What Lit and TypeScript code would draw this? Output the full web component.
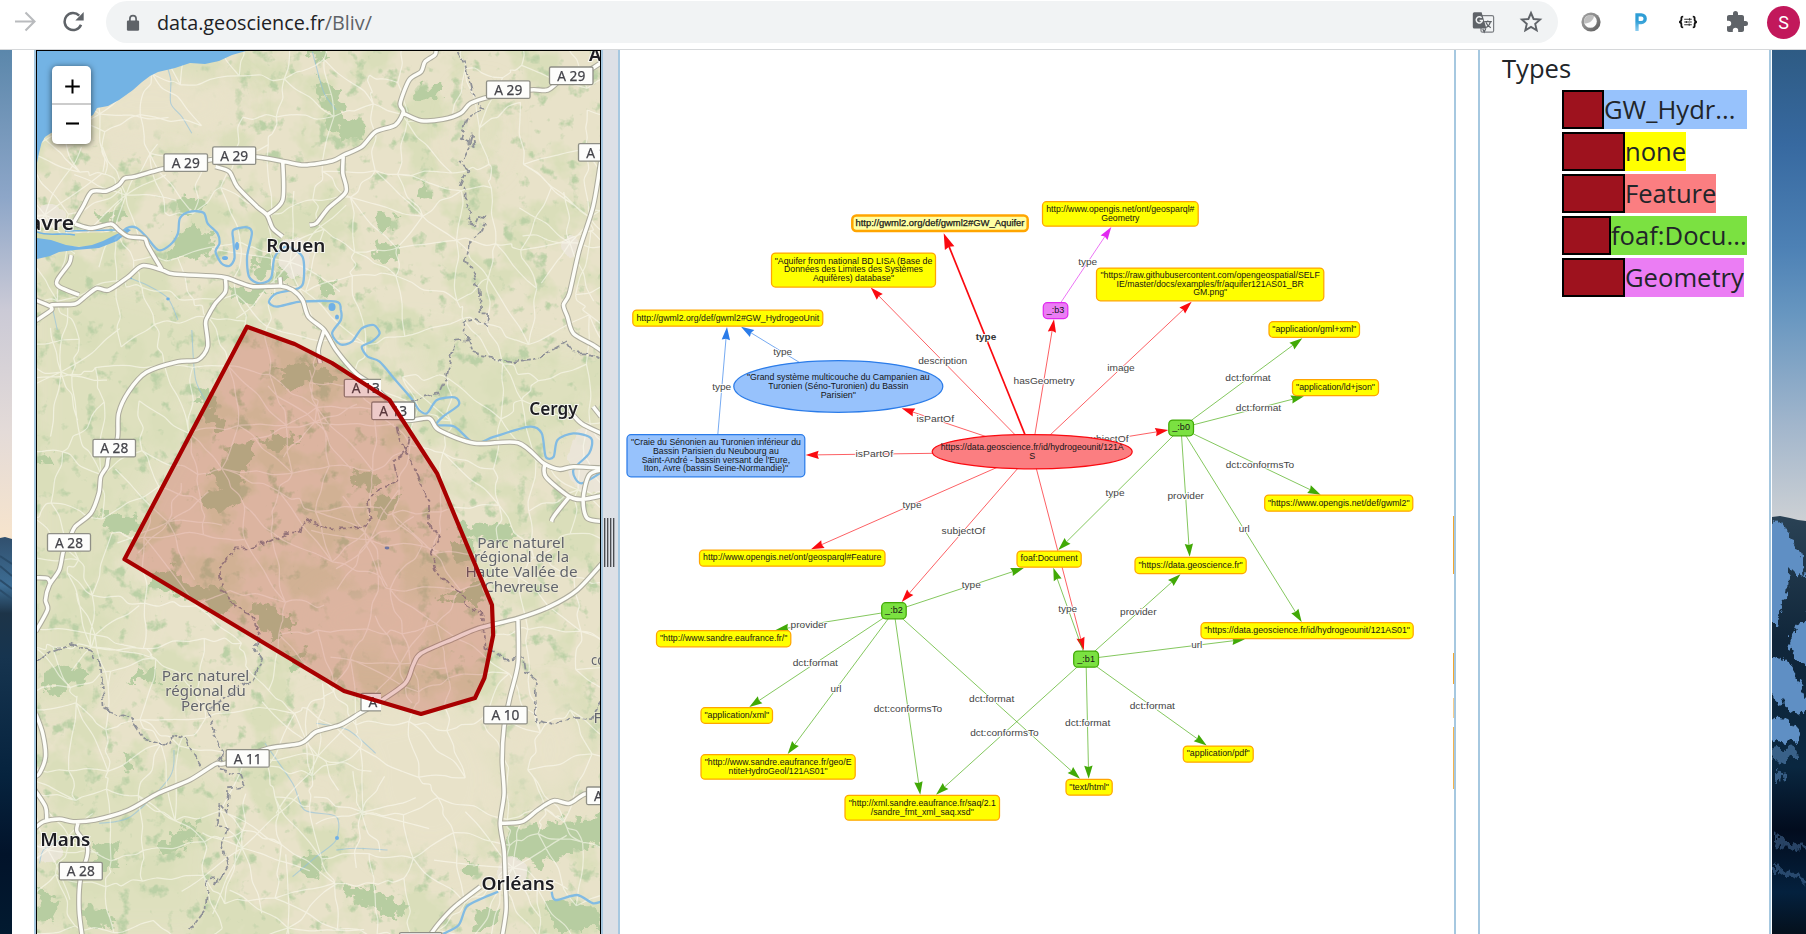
import { LitElement, html, svg, css, nothing } from "lit";
import { customElement } from "lit/decorators.js";

type Pt = [number, number];

/* ---------- map geometry helpers ---------- */

// The map sheet is digitised in three rows; each has its own vertical origin.
const ROW_TOP = [0, 310, 610];
const SX = 620 / 1568;
const SY = 1 / 3;

const pts = (row: number, data: string): Pt[] =>
  data.split(" ").map((p) => {
    const [x, y] = p.split(",").map(Number);
    return [x * SX, y * SY + ROW_TOP[row]] as Pt;
  });

const f = (n: number) => n.toFixed(1);

const smooth = (p: Pt[]): string => {
  let d = `M${f(p[0][0])} ${f(p[0][1])}`;
  for (let i = 0; i < p.length - 1; i++) {
    const a = p[i - 1] ?? p[i];
    const b = p[i];
    const c = p[i + 1];
    const e = p[i + 2] ?? c;
    const k = 7;
    d += `C${f(b[0] + (c[0] - a[0]) / k)} ${f(b[1] + (c[1] - a[1]) / k)} ${f(c[0] - (e[0] - b[0]) / k)} ${f(c[1] - (e[1] - b[1]) / k)} ${f(c[0])} ${f(c[1])}`;
  }
  return d;
};

const MOTORWAYS: [number, string][] = [
  [0, "185,670 210,620 232,575 270,573 300,555 315,535 340,530 400,510 430,503 540,478 640,470 720,485 770,495 840,483 870,465 915,440 950,395 1000,375 1020,335 1012,310 1035,240 1065,215 1075,185 1100,165 1103,150"],
  [0, "1020,340 1065,362 1120,358 1165,340 1190,310 1240,290 1340,270 1385,270 1420,240 1490,210 1530,180"],
  [0, "545,500 580,515 600,560 650,620 675,645 690,685 715,710"],
  [0, "715,480 715,600 675,645"],
  [0, "868,470 867,520 875,575 830,625 800,670 783,675"],
  [0, "180,765 175,790 145,840 150,860 200,885"],
  [0, "90,962 130,930 130,915 190,912 215,890 245,865 275,870 325,830 360,797 410,810 440,822 560,830 600,845 640,860 710,858 740,870 765,900 780,950 820,990 850,1050 900,1120 930,1145 985,1205 1020,1260 1085,1255 1110,1290 1200,1330 1310,1328 1375,1390 1415,1408 1450,1400 1530,1405"],
  [0, "410,810 375,740 365,715 325,710 300,690 280,672 230,685 190,672"],
  [0, "90,900 130,920"],
  [0, "710,858 708,832"],
  [0, "570,835 570,875 545,910 525,950 520,970 525,1040 500,1080 450,1085 370,1117 325,1175 300,1240 297,1315 275,1370 270,1400 255,1430 250,1480 230,1540 190,1580 175,1620 160,1655 150,1710 125,1755 115,1800 120,1830 90,1895"],
  [1, "88,803 120,805 128,825"],
  [1, "820,60 805,120 810,160"],
  [1, "1378,460 1380,500 1440,560 1475,568 1530,555"],
  [1, "1530,478 1490,495 1475,568 1485,625 1530,635"],
  [1, "1440,560 1400,620 1395,635"],
  [0, "1520,480 1500,620 1465,750 1440,880 1425,915 1435,950 1450,1000 1500,1035 1530,1060"],
  [1, "1440,300 1470,340 1530,375"],
  [1, "1500,290 1520,320"],
  [1, "1530,750 1460,840 1390,890 1310,925 1210,955 1150,985 1065,1030 1045,1065 1025,1120 960,1175 910,1210 860,1245 800,1265 760,1300 680,1315 570,1360 545,1362 480,1410 400,1450 325,1500 240,1530 185,1535 150,1527 110,1535 88,1555"],
  [2, "1310,30 1310,160 1290,260 1275,350 1270,450 1275,550 1265,640 1275,720 1278,820 1280,900 1270,980"],
  [2, "1268,640 1320,635 1360,600 1400,572 1440,580 1480,552 1530,555"],
  [2, "1215,830 1150,890 1110,940 1085,980"],
  [2, "197,640 195,665 220,705 220,740 203,810 200,900 208,980"],
  [2, "90,310 108,370 115,440 100,490 88,500"],
  [2, "88,540 115,590 118,630"],
];

const RIVERS: [number, string][] = [
  [0, "290,720 320,685 345,683 370,710 400,750 430,735 450,700 455,655 480,635 515,638 525,670 550,700 555,730 545,755 560,790 580,798 593,775 590,720 590,690 625,682 637,700 625,770 630,830 655,850 685,835 695,770 725,740 765,770 768,840 755,865 700,880 680,905 700,920 760,905 850,905 862,930 862,960 840,1000 860,1033 890,1025 915,985 945,975 960,1000 940,1025 915,1040 930,1070 960,1085 1000,1140 1040,1195 1060,1230 1080,1240 1105,1200 1150,1192 1160,1215 1120,1250 1105,1275 1150,1280 1200,1330 1250,1310 1340,1280 1370,1300 1380,1370 1400,1370 1410,1320 1450,1300 1495,1315 1490,1360 1450,1410 1470,1450 1530,1410"],
  [2, "1530,870 1500,880 1460,855 1405,870 1395,845"],
  [2, "1260,845 1220,865 1180,890 1160,945 1120,972"],
];

const STREAMS: [number, string][] = [
  [0, "790,155 800,200 820,280 850,330"],
  [0, "420,190 432,240 432,310 460,350 485,400"],
  [0, "330,835 380,860 425,895 450,960"],
  [1, "485,60 495,210 530,290"],
  [1, "130,-20 145,60"],
  [2, "440,420 430,500 330,620 250,640"],
  [2, "670,400 740,520 770,600 850,620 850,690 800,740 740,800"],
  [2, "850,720 900,715 980,720"],
  [2, "800,340 880,360 950,430"],
  [2, "150,690 110,720 100,760"],
];

const BORDERS: [number, string][] = [
  [0, "1160,150 1178,200 1195,280 1222,330 1190,345 1180,360 1163,420 1200,435 1195,400 1180,460 1165,490 1182,510 1163,560 1180,570 1180,610 1195,640 1180,665 1200,675 1210,650 1228,655 1215,700 1190,730 1178,780 1210,860 1215,940 1235,940 1232,975 1200,955 1170,965 1170,1000 1190,1020 1150,1025 1130,1130 1110,1180 1040,1200"],
  [1, "1180,80 1195,130 1240,140 1300,155 1360,145 1430,95 1450,130 1480,130 1520,150"],
  [1, "1005,350 1010,385 1040,450 1065,520 1085,580 1085,650 1115,680 1090,730 1100,780 1140,830 1170,850 1180,885 1220,910 1222,950 1225,1010 1285,1050 1325,1040 1330,1085 1355,1110 1355,1230 1400,1245 1450,1220 1495,1225 1530,1160"],
  [1, "1035,380 1025,430 995,450 1005,510 960,540 930,580 940,630 910,655 840,655 800,640 770,625 760,665 720,670 680,695 630,715 600,715 555,775 560,840 575,850 585,885 630,910 655,950 645,1020 665,1055 640,1110 570,1160 525,1200 545,1260 540,1280 565,1330 540,1370 510,1375 480,1320 465,1285 435,1275 430,1305 365,1285 330,1225 265,1200 255,1070 235,1025 180,1002 140,1020 90,1055"],
  [2, "565,430 555,475 610,495 620,525 580,535 575,605 555,575 545,650 575,655 560,700 575,770 545,830 550,805 525,805 520,900 480,960"],
];

const FORESTS: [number, string][] = [
  [0, "450,700 490,680 540,700 535,760 480,780 425,780 440,740"],
  [0, "800,230 860,270 850,300 880,340 920,370 910,410 870,420 830,380 820,310"],
  [0, "780,155 820,160 830,180 800,185"],
  [0, "1050,260 1110,260 1120,290 1070,305 1050,290"],
  [0, "640,770 690,760 690,810 650,840"],
  [0, "570,860 640,865 690,880 650,910 610,905 580,880"],
  [0, "950,640 1000,650 990,690 950,690"],
  [0, "940,720 1010,740 1000,780 950,770"],
  [0, "1060,540 1090,560 1090,595 1065,590"],
  [0, "700,800 735,810 730,840 705,840"],
  [0, "230,650 300,630 320,650 260,670"],
  [0, "440,600 500,590 520,620 470,640 450,625"],
  [0, "800,830 850,850 840,880 810,880"],
  [1, "570,410 640,400 640,440 600,520 620,560 560,610 510,570 560,540 530,490 570,450"],
  [1, "690,180 760,150 850,190 840,220 760,220 730,260 720,210"],
  [1, "530,270 570,330 550,370 520,320"],
  [1, "640,380 740,370 760,400 700,430"],
  [1, "890,480 960,500 950,540 900,530"],
  [1, "950,560 1010,550 980,630 950,620"],
  [1, "250,610 350,620 360,660 280,665"],
  [1, "380,790 440,770 470,820 570,830 590,890 560,920 500,870 400,850"],
  [1, "650,880 740,940 700,990 620,900"],
  [1, "1140,690 1200,700 1190,760 1150,750"],
  [1, "1160,640 1290,650 1300,680 1170,690"],
  [1, "1100,870 1220,820 1220,880"],
  [1, "490,230 540,250 530,290 500,270"],
  [1, "60,450 130,430 130,460"],
  [2, "120,180 190,160 215,200 160,250 100,230"],
  [2, "310,210 390,170 400,220"],
  [2, "470,640 510,630 505,680 470,700 450,740 400,720 430,690"],
  [2, "240,700 300,700 300,770 240,790"],
  [2, "90,840 150,880 130,940 90,920"],
  [2, "200,890 270,900 290,940 220,950"],
  [2, "770,730 820,740 800,820 760,790"],
  [2, "860,830 960,840 1020,890 1000,930 930,880 870,860"],
  [2, "1280,660 1400,640 1530,620 1530,700 1440,720 1370,770 1290,750"],
  [2, "1200,900 1270,890 1240,960 1200,960"],
  [2, "1380,870 1500,890 1520,960 1400,960"],
  [2, "1160,740 1220,770 1200,800"],
  [2, "320,430 340,450 335,490 315,480"],
  [2, "680,-10 745,30 735,60 680,30"],
  [2, "720,130 780,120 750,190"],
];

// [x, y, width, text] of each road shield
const SHIELDS: [number, number, number, string][] = [
  [164, 153.8, 43.5, "A 29"],
  [212.7, 146.8, 43, "A 29"],
  [486.5, 80.8, 43.5, "A 29"],
  [549.5, 67, 43.5, "A 29"],
  [578.5, 143.6, 43.5, "A 16"],
  [93, 439.3, 42.5, "A 28"],
  [47.5, 533.6, 43, "A 28"],
  [371.7, 402, 43, "A 13"],
  [483.7, 706.3, 43.5, "A 10"],
  [226.2, 749.6, 43, "A 11"],
  [59.3, 862.3, 43, "A 28"],
  [586.5, 787, 43, "A 19"],
];

// Deterministic generator so the minor road mesh is the same on each paint.
const rng = (seed: number) => () => {
  seed = (seed * 1664525 + 1013904223) % 4294967296;
  return seed / 4294967296;
};

const minorRoads = (): string => {
  const r = rng(77);
  const step = 43;
  const cols = 15;
  const rows = 22;
  const grid: Pt[][] = [];
  for (let j = 0; j < rows; j++) {
    grid.push([]);
    for (let i = 0; i < cols; i++) {
      grid[j].push([20 + i * step + (r() - 0.5) * 34, 30 + j * step + (r() - 0.5) * 34]);
    }
  }
  const link = (a: Pt, b: Pt) => {
    const out: Pt[] = [a];
    const n = 4;
    for (let k = 1; k < n; k++) {
      const t = k / n;
      out.push([a[0] + (b[0] - a[0]) * t + (r() - 0.5) * 6, a[1] + (b[1] - a[1]) * t + (r() - 0.5) * 6]);
    }
    out.push(b);
    return smooth(out);
  };
  let d = "";
  for (let j = 0; j < rows; j++) {
    for (let i = 0; i < cols; i++) {
      const a = grid[j][i];
      if (i + 1 < cols && r() < 0.8) d += link(a, grid[j][i + 1]);
      if (j + 1 < rows && r() < 0.8) d += link(a, grid[j + 1][i]);
      if (i + 1 < cols && j + 1 < rows && r() < 0.4) d += link(a, grid[j + 1][i + 1]);
    }
  }
  const towns: Pt[] = [[290, 262], [315, 422], [400, 664], [370, 540], [48, 850], [513, 868], [168, 522], [570, 243], [362, 812], [61, 372], [288, 928], [100, 114], [45, 215], [126, 195], [318, 756], [95, 635], [242, 848]];
  for (const t of towns) {
    const n = 6 + Math.floor(r() * 3);
    for (let k = 0; k < n; k++) {
      const ang = (k / n) * Math.PI * 2 + r() * 0.6;
      const len = 40 + r() * 40;
      d += link(t, [t[0] + Math.cos(ang) * len, t[1] + Math.sin(ang) * len]);
    }
  }
  return d;
};

const MINOR = minorRoads();
const AREA = "247,326.7 294.6,344 332,363 389.5,400 437,473.3 492,605 493.2,635 484.4,678 475,698 421,714 344,691 124.5,559.3";

@customElement("map-view")
class MapView extends LitElement {
  static styles = css`
    :host { display: block; position: relative; border: 1px solid #000; border-bottom: 0; box-sizing: border-box; overflow: hidden; }
    svg { display: block; width: 563px; height: 883px; overflow: hidden; }
    .city { font-family: "Noto Sans", "Open Sans", sans-serif; font-weight: 600; fill: #1d1d22; stroke: #fff; stroke-opacity: .75; stroke-width: 2px; paint-order: stroke; }
    .park { font-family: "Noto Sans", "Open Sans", sans-serif; font-size: 14.8px; fill: #62646c; stroke: #efecdc; stroke-opacity: .7; stroke-width: 1.6px; paint-order: stroke; }
    .shield { font-family: "Noto Sans", "Open Sans", sans-serif; font-size: 14.4px; fill: #45454b; stroke: #45454b; stroke-width: .25px; }
    .zoom { position: absolute; left: 15px; top: 15px; width: 39px; display: flex; flex-direction: column; background: #fff; border-radius: 5px; box-shadow: 0 1px 6px rgba(0,0,0,.6); }
    .zoom div { height: 39px; box-sizing: border-box; display: flex; align-items: center; justify-content: center; }
    .zoom .in { padding-top: 3px; border-bottom: 2px solid #ccc; }
    .zoom .out { padding-bottom: 2px; }
    .zoom svg { width: 15px; height: 15px; margin-left: 1px; }
  `;

  city(x: number, y: number, size: number, w: number, t: string, anchor = "middle") {
    return svg`<text class="city" x=${x} y=${y} font-size=${size} text-anchor=${anchor} textLength=${w} lengthAdjust="spacingAndGlyphs">${t}</text>`;
  }
  park(x: number, y: number, w: number, t: string) {
    return svg`<text class="park" x=${x} y=${y} text-anchor="middle" textLength=${w} lengthAdjust="spacingAndGlyphs">${t}</text>`;
  }
  shield(x: number, y: number, w: number, t: string) {
    return svg`<g><rect x=${x} y=${y} width=${w} height="17.6" rx="1.5" fill="#fdfdfb" stroke="#8f8f86" stroke-width="1.3"/>
      <text class="shield" x=${x + w / 2} y=${y + 14} text-anchor="middle" textLength="28" lengthAdjust="spacingAndGlyphs">${t}</text></g>`;
  }

  render() {
    const roads = MOTORWAYS.map(([r, d]) => smooth(pts(r, d))).join("");
    const rivers = RIVERS.map(([r, d]) => smooth(pts(r, d))).join("");
    const streams = STREAMS.map(([r, d]) => smooth(pts(r, d))).join("");
    const borders = BORDERS.map(([r, d]) => "M" + pts(r, d).map((p) => p.map(f).join(" ")).join("L")).join("");
    return html`
      <svg viewBox="37 51 563 883">
        <defs>
          <filter id="meadow" x="0" y="0" width="1" height="1" color-interpolation-filters="sRGB">
            <feTurbulence type="fractalNoise" baseFrequency="0.02" numOctaves="5" seed="8"/>
            <feColorMatrix values="0 0 0 0 .855  0 0 0 0 .872  0 0 0 0 .73  0 0 0 6 -2.9"/>
          </filter>
          <filter id="wood" x="0" y="0" width="1" height="1" color-interpolation-filters="sRGB">
            <feTurbulence type="fractalNoise" baseFrequency="0.06" numOctaves="4" seed="21"/>
            <feColorMatrix values="0 0 0 0 .735  0 0 0 0 .815  0 0 0 0 .65  0 0 0 6 -3.65"/>
          </filter>
          <filter id="ragged" x="-.05" y="-.05" width="1.1" height="1.1">
            <feTurbulence type="fractalNoise" baseFrequency="0.09" numOctaves="3" seed="4"/>
            <feDisplacementMap in="SourceGraphic" scale="22" xChannelSelector="R" yChannelSelector="G"/>
            <feGaussianBlur stdDeviation=".5"/>
          </filter>
          <filter id="wiggle" x="-.05" y="-.05" width="1.1" height="1.1">
            <feTurbulence type="fractalNoise" baseFrequency="0.09" numOctaves="2" seed="9"/>
            <feDisplacementMap in="SourceGraphic" scale="8" xChannelSelector="R" yChannelSelector="G"/>
          </filter>
          <filter id="soft" x="-.3" y="-.3" width="1.6" height="1.6"><feGaussianBlur stdDeviation="14"/></filter>
          <clipPath id="cutA"><rect x="340" y="300" width="41" height="460"/></clipPath>
        </defs>
        <rect x="37" y="51" width="563" height="883" fill="#e8e2c9"/>
        <g filter="url(#soft)" fill="#dde0bd" opacity=".9">
          <path d="M37 270L150 290 220 320 180 430 110 560 140 620 90 700 37 720Z"/>
          <path d="M60 760L220 780 210 934 37 934 37 880Z"/>
          <path d="M400 330L600 360 600 420 480 480 440 400Z"/>
        </g>
        <rect x="37" y="51" width="563" height="883" filter="url(#meadow)"/>
        <rect x="37" y="51" width="563" height="883" filter="url(#wood)"/>
        <g filter="url(#soft)" fill="#e8e2c9">
          <ellipse cx="430" cy="780" rx="72" ry="82"/>
          <ellipse cx="360" cy="735" rx="60" ry="26"/>
          <ellipse cx="550" cy="750" rx="36" ry="55"/>
          <ellipse cx="480" cy="130" rx="20" ry="40" opacity=".7"/>
          <ellipse cx="150" cy="105" rx="90" ry="34"/>
          <ellipse cx="370" cy="620" rx="60" ry="34" opacity=".8"/>
        </g>
        <g fill="#b7cda1" filter="url(#ragged)">
          ${FORESTS.map(([r, d]) => svg`<polygon points=${pts(r, d).map((p) => p.map(f).join(",")).join(" ")}/>`)}
        </g>
        <g fill="#ece6da" opacity=".9" filter="url(#wiggle)">
          <ellipse cx="294" cy="258" rx="15" ry="20"/><ellipse cx="513" cy="872" rx="15" ry="16"/>
          <ellipse cx="50" cy="852" rx="13" ry="12"/><ellipse cx="571" cy="246" rx="10" ry="10"/><ellipse cx="590" cy="460" rx="22" ry="34"/>
          <ellipse cx="50" cy="216" rx="16" ry="12"/>
        </g>
        <path d=${streams} fill="none" stroke="#8fc0dd" stroke-opacity=".6" stroke-width="1.1"/>
        <path d=${MINOR} fill="none" stroke="#fbfaf0" stroke-opacity=".6" stroke-width="1.25" stroke-linejoin="round"/>
        <path d="M37 51H246L232 55 219 61 205 64 190 63 175 68 158 72 150 76 142 82 133 90 119 100 108 106 97 108 93 115 72 126 51 133 45 137 41.5 143 39 153 37 163Z" fill="#73b3e4"/>
        <path d="M37 232L60 235 80 233 119 232 108 243 90 247 60 246 37 240Z" fill="#d5dba9"/>
        <path d="M37 238L51 240 66 245 79 247 92 245 103 241 119 233 126 228 131 230 117 241 99 248 75 250 59 252 50 256 37 259Z" fill="#73b3e4"/>
        <path d="M37 232C50 237 60 232 75 235M65 231L115 230" fill="none" stroke="#73b3e4" stroke-width="1.6"/>
        <ellipse cx="332" cy="307" rx="3.5" ry="4" fill="#6fb0e6"/><ellipse cx="337" cy="317" rx="2" ry="2.5" fill="#6fb0e6"/>
        <ellipse cx="237" cy="246" rx="2" ry="4" fill="#6fb0e6"/><ellipse cx="225" cy="258" rx="3" ry="2" fill="#6fb0e6"/>
        <ellipse cx="387" cy="548" rx="2.4" ry="1.4" fill="#5f93cc"/><ellipse cx="337" cy="838" rx="2" ry="2" fill="#6fb0e6"/>
        <ellipse cx="130" cy="278" rx="2.2" ry="1.2" fill="#6fb0e6"/><ellipse cx="168" cy="299" rx="1.8" ry="1.4" fill="#6fb0e6"/>
        <path d=${rivers} fill="none" stroke="#82bbe3" stroke-width="2.3" stroke-linejoin="round"/>
        <path d=${borders} fill="none" stroke="#8e9097" stroke-width="1.7" stroke-dasharray="8 2.5 4 2.5" filter="url(#wiggle)"/>
        <path d=${roads} fill="none" stroke="#aeac9d" stroke-width="5.6" stroke-linejoin="round"/>
        <path d=${roads} fill="none" stroke="#fdfdf8" stroke-width="3.5" stroke-linejoin="round"/>
        <g clip-path="url(#cutA)">${this.shield(344.3, 379.3, 43, "A 13")}${this.shield(361, 693.3, 43, "A 11")}</g>
        <rect x="399.5" y="932.6" width="42.5" height="18" rx="1.5" fill="#fdfdfb" stroke="#8f8f86" stroke-width="1.3"/>
        ${SHIELDS.map((s) => this.shield(...s))}
        ${this.city(74, 230.3, 20, 45, "avre", "end")}
        ${this.city(295.8, 252.3, 18, 59, "Rouen")}
        ${this.city(553.5, 415.3, 18, 48.5, "Cergy")}
        ${this.city(65.3, 845.7, 18.4, 50, "Mans")}
        ${this.city(518, 889.6, 18.4, 73, "Orléans")}
        ${this.city(589, 61.3, 18.4, 66, "Amiens", "start")}
        ${this.park(521, 547.5, 87.5, "Parc naturel")}
        ${this.park(521.5, 562.3, 95, "régional de la")}
        ${this.park(521.5, 577.3, 112, "Haute Vallée de")}
        ${this.park(521.5, 592, 74.5, "Chevreuse")}
        ${this.park(205.6, 681.3, 87.5, "Parc naturel")}
        ${this.park(205.6, 696, 80.5, "régional du")}
        ${this.park(205.6, 711.3, 49, "Perche")}
        ${this.park(598, 665.3, 14, "co")}
        ${this.park(597.5, 723, 8, "F")}
        <polygon points=${AREA} fill="#b00000" fill-opacity=".2" stroke="#a80000" stroke-width="4.2" stroke-linejoin="round"/>
      </svg>
      <div class="zoom">
        <div class="in"><svg viewBox="0 0 15 15"><path d="M7.5 .5v14M.2 7.5h14.6" stroke="#000" stroke-width="2"/></svg></div>
        <div class="out"><svg viewBox="0 0 15 15"><path d="M1 7.5h13" stroke="#000" stroke-width="2.1"/></svg></div>
      </div>`;
  }
}

/* ---------- relation graph ---------- */

type Line = [text: string, baseline: number, width: number];
interface Box { x1: number; y1: number; x2: number; y2: number; kind: string; oval?: boolean; lines: Line[] }

const box = (kind: string, x1: number, y1: number, x2: number, y2: number, lines: Line[], oval = false): Box => ({ x1, y1, x2, y2, kind, lines, oval });

const FILL: Record<string, [string, string]> = {
  none: ["#ffff00", "#ffa500"],
  picked: ["#ffffa3", "#ffa500"],
  hydro: ["#97c2fc", "#2b7ce9"],
  feature: ["#fb7e81", "#fa0a10"],
  doc: ["#7be141", "#41a906"],
  geom: ["#eb7df4", "#e129f0"],
};

const NODES: Box[] = [
  box("picked", 852.3, 215.5, 1027.7, 231, [["http://gwml2.org/def/gwml2#GW_Aquifer", 225.7, 169]]),
  box("none", 771.5, 253, 935.5, 287, [["\"Aquifer from national BD LISA (Base de", 263.7, 157.7], ["Données des Limites des Systèmes", 271.8, 139], ["Aquifères) database\"", 280.5, 81]]),
  box("none", 632.8, 310, 822.8, 326.2, [["http://gwml2.org/def/gwml2#GW_HydrogeoUnit", 320.7, 182.7]]),
  box("hydro", 733.8, 360.5, 942.8, 412.3, [["\"Grand système multicouche du Campanien au", 379.5, 182.7], ["Turonien (Séno-Turonien) du Bassin", 388.7, 140], ["Parisien\"", 397.5, 35.3]], true),
  box("hydro", 627, 434.7, 804.8, 476.8, [["\"Craie du Sénonien au Turonien inférieur du", 444.8, 170], ["Bassin Parisien du Neubourg au", 453.7, 126], ["Saint-André - bassin versant de l'Eure,", 462.5, 148.3], ["Iton, Avre (bassin Seine-Normandie)\"", 470.5, 144.3]]),
  box("feature", 932.2, 434.5, 1132.2, 468.8, [["https://data.geoscience.fr/id/hydrogeounit/121A", 450, 183], ["S", 459, 6]], true),
  box("none", 1042.5, 201.7, 1198.2, 226.2, [["http://www.opengis.net/ont/geosparql#", 211.7, 148.3], ["Geometry", 220.7, 38.3]]),
  box("geom", 1043.3, 302.7, 1067.8, 318.5, [["_:b3", 312.7, 17.7]]),
  box("none", 1096.5, 268, 1323.8, 300.8, [["\"https://raw.githubusercontent.com/opengeospatial/SELF", 277.9, 219.3], ["IE/master/docs/examples/fr/aquifer121AS01_BR", 286.8, 187.3], ["GM.png\"", 294.8, 34]]),
  box("none", 1269, 321.7, 1359.5, 337.3, [["\"application/gml+xml\"", 332, 84]]),
  box("none", 1292.5, 379.5, 1378.5, 395.5, [["\"application/ld+json\"", 390, 79]]),
  box("doc", 1168.8, 420, 1193.5, 435.8, [["_:b0", 429.9, 17.7]]),
  box("none", 699.5, 550, 885, 566.2, [["http://www.opengis.net/ont/geosparql#Feature", 560.3, 178.3]]),
  box("doc", 881.7, 602.7, 906.2, 618.8, [["_:b2", 613, 17.7]]),
  box("none", 656.5, 630.7, 790.8, 646.8, [["\"http://www.sandre.eaufrance.fr/\"", 641, 127.3]]),
  box("none", 701, 707.7, 772.5, 723.3, [["\"application/xml\"", 717.9, 64.7]]),
  box("none", 701, 754.7, 855.2, 779.2, [["\"http://www.sandre.eaufrance.fr/geo/E", 765, 146.7], ["ntiteHydroGeol/121AS01\"", 773.9, 99]]),
  box("none", 845, 795.3, 999.5, 820.2, [["\"http://xml.sandre.eaufrance.fr/saq/2.1", 806, 147], ["/sandre_fmt_xml_saq.xsd\"", 814.8, 103]]),
  box("none", 1017, 551, 1081.2, 567.2, [["foaf:Document", 561, 57]]),
  box("none", 1135, 557.3, 1246.2, 573.5, [["\"https://data.geoscience.fr\"", 567.9, 104.3]]),
  box("none", 1264.7, 495, 1412.8, 511.2, [["\"https://www.opengis.net/def/gwml2\"", 505.9, 141.7]]),
  box("none", 1201, 622.7, 1413.2, 638.5, [["\"https://data.geoscience.fr/id/hydrogeounit/121AS01\"", 633, 205.7]]),
  box("doc", 1073.7, 651, 1098.5, 667.2, [["_:b1", 661.7, 17.7]]),
  box("none", 1183.3, 746, 1253.2, 762.2, [["\"application/pdf\"", 755.9, 63]]),
  box("none", 1066, 779.3, 1112.2, 795.2, [["\"text/html\"", 789.9, 39.7]]),
];

type Edge = [color: string, x1: number, y1: number, x2: number, y2: number, label: string, lx: number, ly: number];
const R = "#fa0a10", G = "#41a906", B = "#2b7ce9", V = "#e129f0";
const WIDTHS: Record<string, number> = { type: 19, description: 49, isPartOf: 37.5, hasGeometry: 61, image: 27.5, subjectOf: 43.5, "dct:format": 45.3, "dct:conformsTo": 68.5, provider: 36.5, url: 11 };

const EDGES: Edge[] = [
  [R, 1032, 452, 870.7, 287.6, "description", 942.7, 363.8],
  [R, 1032, 452, 901.7, 408.3, "isPartOf", 935.3, 422],
  [R, 1032, 452, 805.7, 455, "isPartOf", 874.3, 456.8],
  [R, 1032, 452, 1054, 319.3, "hasGeometry", 1044, 383.8],
  [R, 1032, 452, 1191.7, 301.7, "image", 1121, 371],
  [R, 1032, 452, 1168.3, 430, "subjectOf", 1106.8, 442.4],
  [R, 1032, 452, 811, 549.3, "type", 912, 508],
  [R, 1032, 452, 901.7, 602, "subjectOf", 963.3, 534],
  [R, 1032, 452, 1083.8, 650.3, "", 0, 0],
  [G, 1181, 428, 1302.3, 338.3, "dct:format", 1248, 381],
  [G, 1181, 428, 1304, 396.3, "dct:format", 1258.5, 411],
  [G, 1181, 428, 1320.7, 494.7, "dct:conformsTo", 1260, 468],
  [G, 1181, 428, 1058.3, 550, "type", 1115, 496],
  [G, 1181, 428, 1189.7, 556.7, "provider", 1185.7, 499],
  [G, 1181, 428, 1301.7, 622, "url", 1244.3, 532],
  [G, 894, 611, 1023.8, 568, "type", 971.3, 588],
  [G, 894, 611, 775.7, 630, "provider", 808.8, 628],
  [G, 894, 611, 749.3, 707, "dct:format", 815.3, 666],
  [G, 894, 611, 787.7, 754, "url", 836, 692],
  [G, 894, 611, 920.3, 794.7, "dct:conformsTo", 908, 712],
  [G, 894, 611, 1080, 778.7, "dct:format", 991.7, 702],
  [G, 1086, 659, 1053.3, 567.7, "type", 1067.7, 612],
  [G, 1086, 659, 1180.5, 574.3, "provider", 1138.3, 615],
  [G, 1086, 659, 1245, 639.3, "url", 1196.7, 647.8],
  [G, 1086, 659, 936, 794.7, "dct:conformsTo", 1004.4, 736],
  [G, 1086, 659, 1088.7, 778.7, "dct:format", 1087.7, 726],
  [G, 1086, 659, 1206.7, 745.5, "dct:format", 1152.3, 709],
  [B, 838, 386, 741, 326.7, "type", 782.7, 355.2],
  [B, 716, 455.5, 727, 327, "type", 721.7, 390],
  [V, 1055.5, 310.5, 1111.3, 226.9, "type", 1087.7, 265],
];

@customElement("relation-graph")
class RelationGraph extends LitElement {
  static styles = css`
    :host { display: block; background: #fff; }
    svg { display: block; width: 834px; height: 884px; }
    text { font-family: "Liberation Sans", Arial, sans-serif; }
    .node { font-size: 9px; fill: #151515; }
    .strong { stroke: #222; stroke-width: .25px; }
    .label { font-size: 9.1px; fill: #444; stroke: #fff; stroke-width: 1.6px; paint-order: stroke; }
    .label-strong { font-size: 9.1px; font-weight: 700; fill: #343434; stroke: #fff; stroke-width: 1.6px; paint-order: stroke; }
  `;

  arrow(color: string, x1: number, y1: number, x2: number, y2: number, size = 13, w = 0.9, op = 0.72) {
    const a = Math.atan2(y2 - y1, x2 - x1);
    const c = Math.cos(a), s = Math.sin(a);
    const at = (l: number, o: number) => `${f(x2 - c * l - s * o)},${f(y2 - s * l + c * o)}`;
    return svg`<line x1=${x1} y1=${y1} x2=${x2 - c * size * 0.8} y2=${y2 - s * size * 0.8} stroke=${color} stroke-width=${w} stroke-opacity=${op}/>
      <polygon points=${[at(0, 0), at(size, size * 0.32), at(size * 0.9, 0), at(size, -size * 0.32)].join(" ")} fill=${color}/>`;
  }

  node(n: Box) {
    const [fill, line] = FILL[n.kind];
    const cx = (n.x1 + n.x2) / 2, cy = (n.y1 + n.y2) / 2;
    const w = n.x2 - n.x1, h = n.y2 - n.y1;
    const sw = n.kind === "picked" ? 2.5 : 1.25;
    return svg`
      ${n.oval
        ? svg`<ellipse cx=${cx} cy=${cy} rx=${w / 2} ry=${h / 2} fill=${fill} stroke=${line} stroke-width=${sw}/>`
        : svg`<rect x=${n.x1} y=${n.y1} width=${w} height=${h} rx="4" fill=${fill} stroke=${line} stroke-width=${sw}/>`}
      ${n.lines.map(([t, y, tw]) => svg`<text class=${n.kind === "picked" ? "node strong" : "node"} x=${cx} y=${y} text-anchor="middle" textLength=${tw} lengthAdjust="spacingAndGlyphs">${t}</text>`)}`;
  }

  render() {
    return html`<svg viewBox="620 50 834 884">
      ${EDGES.map(([c, a, b, x, y]) => this.arrow(c, a, b, x, y))}
      ${EDGES.map(([, , , , , t, x, y]) => t ? svg`<text class="label" x=${x} y=${y} text-anchor="middle" textLength=${WIDTHS[t]} lengthAdjust="spacingAndGlyphs">${t}</text>` : nothing)}
      ${this.arrow(R, 1032, 452, 943.7, 233.3, 16, 1.7, 1)}
      <text class="label-strong" x="986" y="340.3" text-anchor="middle" textLength="20.5" lengthAdjust="spacingAndGlyphs">type</text>
      ${NODES.map((n) => this.node(n))}
      <g fill="#f2a62e">
        <rect x="1453" y="516" width="1" height="58"/><rect x="1453" y="653" width="1" height="31"/>
        <rect x="1453" y="698" width="1" height="20" opacity=".55"/><rect x="1453" y="727" width="1" height="62" opacity=".85"/>
      </g>
    </svg>`;
  }
}

/* ---------- page ---------- */

const TYPES: [string, string, string][] = [
  ["GW_Hydr...", "blue", "42"],
  ["none", "yellow", "63"],
  ["Feature", "red", "63"],
  ["foaf:Docu...", "green", "49"],
  ["Geometry", "violet", "63"],
];

@customElement("app-root")
class AppRoot extends LitElement {
  static styles = css`
    :host { display: flex; flex-direction: column; width: 1806px; height: 934px; overflow: hidden; background: #fff; font-family: "Open Sans", "Noto Sans", sans-serif; }
    .bar { flex: none; display: flex; align-items: center; height: 50px; padding: 0 6px 5px 12px; box-sizing: border-box; border-bottom: 1px solid #d6d8da; }
    .bar svg { display: block; flex: none; }
    .forward { margin-right: 24px; }
    .reload { margin-right: 21px; }
    .pill { flex: none; display: flex; align-items: center; width: 1452px; height: 42px; padding: 0 15px 0 20px; box-sizing: border-box; border-radius: 21px; background: #f1f3f4; }
    .lock { margin-top: 1px; }
    .url { flex: 1; margin-left: 17px; padding-top: 1px; font-size: 19.8px; line-height: 41px; color: #202124; white-space: nowrap; }
    .path { color: #5f6368; }
    .star { margin-left: 24px; }
    .ext { display: flex; align-items: center; flex: 1; padding-left: 21px; }
    .ring { margin-right: 30px; }
    .pee { margin-right: 29px; }
    .braces { margin-right: 27px; }
    .avatar { margin-left: auto; width: 33px; height: 33px; border-radius: 50%; background: #c2185b; color: #fff; font: 18px/33px Roboto, sans-serif; text-align: center; }
    .page { flex: 1; display: flex; min-height: 0; }
    .wall svg { display: block; }
    .left { width: 12px; }
    .right { flex: 1; }
    .gap { width: 22px; }
    .map-pane { display: flex; border-left: 2px solid #a6c8e0; border-right: 2px solid #a6c8e0; }
    map-view { width: 565px; }
    .split { width: 15px; box-sizing: border-box; padding: 468px 3px 0 0; background: #dce0e6; display: flex; align-items: flex-start; justify-content: center; gap: 2px; }
    .grip { width: 1px; height: 49px; background: #4b4d52; box-shadow: 1px 0 0 #a9acb2; }
    .graph-pane { width: 834px; border-left: 2px solid #a6c8e0; border-right: 2px solid #a6c8e0; }
    .mid { width: 22px; }
    .side { width: 267px; margin-right: 1px; padding-left: 22px; border-left: 2px solid #a6c8e0; border-right: 2px solid #a6c8e0; color: #212529; font-size: 25.6px; }
    .title { line-height: 38px; height: 40px; }
    .types { display: flex; flex-direction: column; gap: 3px; padding-left: 60px; }
    .type { display: flex; height: 39px; width: 185px; }
    .swatch { flex: none; box-sizing: border-box; border: 2px solid #000; background: #9e121e; }
    .name { line-height: 39px; white-space: nowrap; }
    .blue { background: #97c2fc; flex: 1; } .yellow { background: #ffff00; } .red { background: #fb7e81; }
    .green { background: #7be141; flex: 1; } .violet { background: #eb7df4; }
  `;

  render() {
    return html`
      <div class="bar">
        <svg class="forward" width="27" height="24" viewBox="0 0 27 24"><path d="M3 11.5h19M13.5 2.5l9 9-9 9" fill="none" stroke="#b9bbbe" stroke-width="2.1"/></svg>
        <svg class="reload" width="22" height="24" viewBox="0 0 22 24"><path d="M18 14.8A8.5 8.5 0 1 1 16.2 5.6" fill="none" stroke="#5f6368" stroke-width="2.5"/><path d="M20.7 2v8.4h-8.4z" fill="#5f6368"/></svg>
        <div class="pill">
          <svg class="lock" width="14" height="18" viewBox="0 0 14 18"><path d="M3.9 8V4.7a3.1 3.1 0 0 1 6.2 0V8" fill="none" stroke="#5f6368" stroke-width="1.7"/><rect x=".9" y="6.4" width="12.2" height="10.4" rx="1.3" fill="#5f6368"/></svg>
          <span class="url">data.geoscience.fr<span class="path">/Bliv/</span></span>
          <svg width="23" height="23" viewBox="0 0 23 23">
            <rect x="9" y="4.6" width="12.6" height="16.6" rx="1.5" fill="#f1f3f4" stroke="#7b7e82" stroke-width="1.2"/>
            <path d="M2.3 1.2H9.6L14.4 17.5H2.3A1.5 1.5 0 0 1 .8 16V2.7A1.5 1.5 0 0 1 2.3 1.2Z" fill="#5f6368"/>
            <path d="M9.6 6.8a3.1 3.1 0 1 0 .8 2.6H7.6" fill="none" stroke="#f1f3f4" stroke-width="1.5"/>
            <path d="M12.2 10.6h7.6M15.8 9.4v1.2M18.4 10.8c-.6 3-2.3 4.6-4.3 5.8M14 11.5c.9 2.3 2.5 4 4.8 5.2M10.8 18l1.4 3 1.6-3.5" fill="none" stroke="#5f6368" stroke-width="1.2"/>
          </svg>
          <svg class="star" width="24" height="24" viewBox="0 0 24 24"><path d="M12 3l2.6 6 6.5.6-4.9 4.3 1.5 6.4L12 16.9l-5.7 3.4 1.5-6.4-4.9-4.3 6.5-.6z" fill="none" stroke="#5f6368" stroke-width="1.9"/></svg>
        </div>
        <div class="ext">
          <svg class="ring" width="24" height="24" viewBox="0 0 24 24">
            <defs><linearGradient id="ring" x1="0" y1="0" x2="1" y2="1"><stop offset="0" stop-color="#a2a2a2"/><stop offset=".45" stop-color="#8b8b8b"/><stop offset="1" stop-color="#555"/></linearGradient></defs>
            <circle cx="12" cy="12" r="9.6" fill="url(#ring)"/><circle cx="11.4" cy="11.4" r="6.4" fill="#fbfbfb"/><path d="M5.4 13.4A6.4 6.4 0 0 1 15 6.2C14.6 10 10 14 5.4 13.4Z" fill="#a9a9a9" opacity=".75"/>
          </svg>
          <svg class="pee" width="16" height="22" viewBox="0 0 16 22">
            <defs><linearGradient id="pee" gradientUnits="userSpaceOnUse" x1="0" y1="20" x2="0" y2="2"><stop offset="0" stop-color="#8bcdf0"/><stop offset=".55" stop-color="#2f9ed6"/></linearGradient></defs>
            <path d="M4 20V3.8H8.3a3.9 3.9 0 0 1 0 7.8H4" fill="none" stroke="url(#pee)" stroke-width="3.3"/>
          </svg>
          <svg class="braces" width="20" height="16" viewBox="0 0 20 16"><path d="M5.2 2.6C3 2.6 3.4 3.6 3.4 5.6 3.4 7.2 2.8 7.8 1.2 8 2.8 8.2 3.4 8.8 3.4 10.4 3.4 12.4 3 13.4 5.2 13.4M14.8 2.6c2.2 0 1.8 1 1.8 3 0 1.6.6 2.2 2.2 2.4-1.6.2-2.2.8-2.2 2.4 0 2 .4 3-1.8 3" fill="none" stroke="#111" stroke-width="1.8"/><path d="M6.2 5.3h7.6M6.2 8h7.6M6.2 10.7h7.6" stroke="#333" stroke-width="1.1"/><path d="M11.6 4.2v2.2M8.4 6.9v2.2M11.2 9.6v2.2" stroke="#333" stroke-width="1.1"/></svg>
          <svg width="24" height="24" viewBox="0 0 24 24"><path d="M20.5 11H19V7c0-1.1-.9-2-2-2h-4V3.5a2.5 2.5 0 0 0-5 0V5H4c-1.1 0-2 .9-2 2v3.8h1.5a2.7 2.7 0 0 1 0 5.4H2V20c0 1.1.9 2 2 2h3.8v-1.5a2.7 2.7 0 0 1 5.4 0V22H17c1.1 0 2-.9 2-2v-4h1.5a2.5 2.5 0 0 0 0-5z" fill="#5f6368"/></svg>
          <div class="avatar">S</div>
        </div>
      </div>
      <div class="page">
        <div class="wall left">
          <svg width="12" height="884" viewBox="0 50 12 884">
            <defs>
              <linearGradient id="skyL" gradientUnits="userSpaceOnUse" x1="0" y1="50" x2="0" y2="540"><stop offset="0" stop-color="#5b87ab"/><stop offset=".3" stop-color="#8da6c8"/><stop offset=".53" stop-color="#cbcad6"/><stop offset=".78" stop-color="#e4dbd8"/><stop offset="1" stop-color="#f7e4cc"/></linearGradient>
              <linearGradient id="rockL" gradientUnits="userSpaceOnUse" x1="0" y1="538" x2="0" y2="934"><stop offset="0" stop-color="#31506e"/><stop offset=".12" stop-color="#3d6d94"/><stop offset=".19" stop-color="#1d3448"/><stop offset=".3" stop-color="#16344f"/><stop offset=".6" stop-color="#06233e"/><stop offset=".8" stop-color="#02132a"/><stop offset="1" stop-color="#021a30"/></linearGradient>
            </defs>
            <rect y="50" width="12" height="490" fill="url(#skyL)"/><path d="M0 538l5-1 7 2v395H0z" fill="url(#rockL)"/>
            <path d="M0 556l12 8M0 566l12 10M0 580l12 9M0 590l12 9" stroke="#2a4c6a" stroke-width="2"/>
          </svg>
        </div>
        <div class="gap"></div>
        <div class="map-pane"><map-view></map-view></div>
        <div class="split"><i class="grip"></i><i class="grip"></i><i class="grip"></i><i class="grip"></i></div>
        <div class="graph-pane"><relation-graph></relation-graph></div>
        <div class="mid"></div>
        <div class="side">
          <div class="title">Types</div>
          <div class="types">
            ${TYPES.map(([name, color, w]) => html`<div class="type"><span class="swatch" style="width:${w}px"></span><span class="name ${color}">${name}</span></div>`)}
          </div>
        </div>
        <div class="wall right">
          <svg width="34" height="884" viewBox="1772 50 34 884">
            <defs>
              <linearGradient id="skyR" gradientUnits="userSpaceOnUse" x1="0" y1="50" x2="0" y2="520"><stop offset="0" stop-color="#2e5b84"/><stop offset=".2" stop-color="#3769a0"/><stop offset=".42" stop-color="#4d81b5"/><stop offset=".56" stop-color="#6796c0"/><stop offset=".8" stop-color="#a2b6cc"/><stop offset="1" stop-color="#ccd0d4"/></linearGradient>
              <linearGradient id="rockR" gradientUnits="userSpaceOnUse" x1="0" y1="516" x2="0" y2="934"><stop offset="0" stop-color="#2a4255"/><stop offset=".3" stop-color="#10263a"/><stop offset=".6" stop-color="#0a2740"/><stop offset=".75" stop-color="#020c1e"/><stop offset=".9" stop-color="#04213e"/><stop offset="1" stop-color="#05101c"/></linearGradient>
              <filter id="snow" x="-.2" y="-.1" width="1.4" height="1.2"><feTurbulence type="fractalNoise" baseFrequency="0.16 0.07" numOctaves="3" seed="5"/><feDisplacementMap in="SourceGraphic" scale="17" xChannelSelector="R" yChannelSelector="G"/></filter>
            </defs>
            <rect x="1772" y="50" width="34" height="480" fill="url(#skyR)"/>
            <path d="M1772 517l8-1 10 2 8 2 8 1v413h-34z" fill="url(#rockR)"/>
            <g fill="#5f8fc4" filter="url(#snow)">
              <path d="M1766 526l16-3 8 12 10 18 6 24-8-2-8-8-4 30-6 12-4 14h-10z"/>
              <path d="M1790 644l8-22 14-12v64l-14-12z"/>
              <path d="M1766 656l20 4 14 20 8 22-6 14-14-10-22-12z"/>
              <path d="M1766 718l22 2 14 16-12 6-24-2z"/>
              <path d="M1766 752l28-4 4 8-20 8zM1776 770l10 6-10 8z" opacity=".55"/>
              <path d="M1774 835l38 16v4l-38-13zM1774 866l38 16v4l-38-13z" opacity=".4"/>
            </g>
          </svg>
        </div>
      </div>`;
  }
}
